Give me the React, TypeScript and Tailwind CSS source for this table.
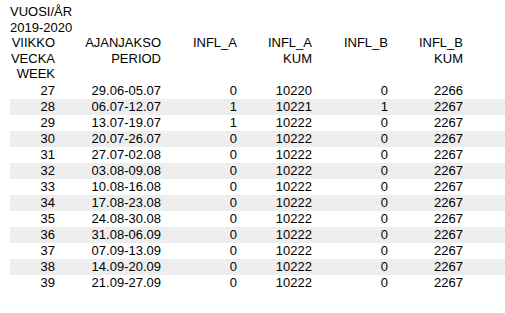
const rows = [
  ["27", "29.06-05.07", "0", "10220", "0", "2266"],
  ["28", "06.07-12.07", "1", "10221", "1", "2267"],
  ["29", "13.07-19.07", "1", "10222", "0", "2267"],
  ["30", "20.07-26.07", "0", "10222", "0", "2267"],
  ["31", "27.07-02.08", "0", "10222", "0", "2267"],
  ["32", "03.08-09.08", "0", "10222", "0", "2267"],
  ["33", "10.08-16.08", "0", "10222", "0", "2267"],
  ["34", "17.08-23.08", "0", "10222", "0", "2267"],
  ["35", "24.08-30.08", "0", "10222", "0", "2267"],
  ["36", "31.08-06.09", "0", "10222", "0", "2267"],
  ["37", "07.09-13.09", "0", "10222", "0", "2267"],
  ["38", "14.09-20.09", "0", "10222", "0", "2267"],
  ["39", "21.09-27.09", "0", "10222", "0", "2267"],
]

const cols = "grid grid-cols-[45px_106px_76px_75px_76px_75px_40px]"

export default function App() {
  return (
    <main
      className="h-[313px] w-[505px] bg-white pl-[10px] pt-[4px] text-[13px] text-black"
      style={{ fontFamily: '"Liberation Sans", Arial, sans-serif' }}
    >
      <div className="leading-[15.5px]">
        <p>VUOSI/ÅR</p>
        <p>2019-2020</p>
        <div className={`${cols} text-right`}>
          <div>
            <p>VIIKKO</p>
            <p>VECKA</p>
            <p>WEEK</p>
          </div>
          <div>
            <p>AJANJAKSO</p>
            <p>PERIOD</p>
          </div>
          <div>INFL_A</div>
          <div>
            <p>INFL_A</p>
            <p>KUM</p>
          </div>
          <div>INFL_B</div>
          <div>
            <p>INFL_B</p>
            <p>KUM</p>
          </div>
          <div />
        </div>
      </div>
      <div className="mt-[1.5px]">
        {rows.map((r, i) => (
          <div key={r[0]} className={`${cols} h-4 text-right leading-4 ${i % 2 === 1 ? "bg-[#eeeeee]" : ""}`}>
            {r.map((c, j) => (
              <div key={j}>{c}</div>
            ))}
            <div />
          </div>
        ))}
      </div>
    </main>
  )
}
